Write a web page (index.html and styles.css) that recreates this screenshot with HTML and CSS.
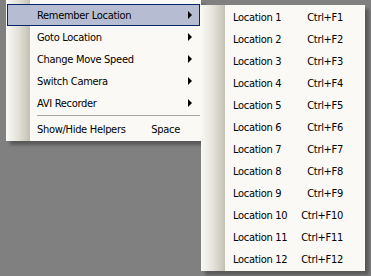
FILE: index.html
```html
<!DOCTYPE html>
<html lang="en">
<head>
  <meta charset="UTF-8" />
  <title>Menu</title>
  <link rel="stylesheet" href="styles.css">
</head>
<body>
  <div class="desk">
    <div class="menu main-menu">
      <div class="item active"><span class="label">Remember Location</span><span class="arrow"></span></div>
      <div class="item"><span class="label">Goto Location</span><span class="arrow"></span></div>
      <div class="item"><span class="label">Change Move Speed</span><span class="arrow"></span></div>
      <div class="item"><span class="label">Switch Camera</span><span class="arrow"></span></div>
      <div class="item"><span class="label">AVI Recorder</span><span class="arrow"></span></div>
      <div class="sep"></div>
      <div class="item"><span class="label">Show/Hide Helpers</span><span class="key">Space</span></div>
    </div>

    <div class="menu sub-menu">
      <div class="item"><span class="label">Location 1</span><span class="key">Ctrl+F1</span></div>
      <div class="item"><span class="label">Location 2</span><span class="key">Ctrl+F2</span></div>
      <div class="item"><span class="label">Location 3</span><span class="key">Ctrl+F3</span></div>
      <div class="item"><span class="label">Location 4</span><span class="key">Ctrl+F4</span></div>
      <div class="item"><span class="label">Location 5</span><span class="key">Ctrl+F5</span></div>
      <div class="item"><span class="label">Location 6</span><span class="key">Ctrl+F6</span></div>
      <div class="item"><span class="label">Location 7</span><span class="key">Ctrl+F7</span></div>
      <div class="item"><span class="label">Location 8</span><span class="key">Ctrl+F8</span></div>
      <div class="item"><span class="label">Location 9</span><span class="key">Ctrl+F9</span></div>
      <div class="item"><span class="label">Location 10</span><span class="key">Ctrl+F10</span></div>
      <div class="item"><span class="label">Location 11</span><span class="key">Ctrl+F11</span></div>
      <div class="item"><span class="label">Location 12</span><span class="key">Ctrl+F12</span></div>
    </div>
  </div>
</body>
</html>
```

FILE: styles.css
```css
/* Reset and base */
* {
  box-sizing: border-box;
  margin: 0;
  padding: 0;
}

body {
  background: #808080;
  width: 371px;
  height: 276px;
  overflow: hidden;
  font-family: "DejaVu Sans Condensed", "Liberation Sans", sans-serif;
  font-size: 11px;
  letter-spacing: -0.3px;
  color: #000;
}

.desk {
  display: flex;
  align-items: flex-start;
  padding-left: 6px;
}

.menu {
  background: linear-gradient(to right, #f9f9f5 0, #e4e2da 12px, #c4c1b4 24px, #faf9f5 24px);
  box-shadow: 4px 4px 3px rgba(0, 0, 0, 0.3);
}

.main-menu {
  width: 195px;
  padding: 4px 1px 1px 1px;
}

.sub-menu {
  width: 164px;
  margin-top: 5px;
  padding: 1px 0;
}

.item {
  display: flex;
  align-items: center;
  height: 22px;
  border: 1px solid transparent;
}

.main-menu .item {
  padding-left: 29px;
}

.sub-menu .item {
  padding-left: 31px;
}

.item.active {
  background: #b6bdd2;
  border-color: #0a246a;
}

.label {
  flex: 1;
  white-space: nowrap;
}

.key {
  white-space: nowrap;
  text-align: right;
}

.main-menu .key {
  margin-right: 19px;
}

.sub-menu .key {
  margin-right: 21px;
}

.arrow {
  width: 0;
  height: 0;
  border-left: 4px solid #000;
  border-top: 4px solid transparent;
  border-bottom: 4px solid transparent;
  margin-right: 7px;
}

.sep {
  height: 3px;
  margin-left: 30px;
  border-top: 1px solid #a6a5a0;
  margin-top: 1px;
}
```
